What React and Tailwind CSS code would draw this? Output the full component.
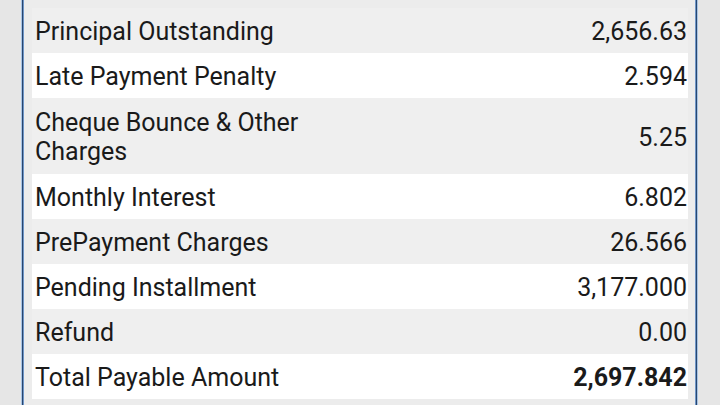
import React from "react";

const rows = [
  ["Principal Outstanding", "2,656.63"],
  ["Late Payment Penalty", "2.594"],
  ["Cheque Bounce & Other Charges", "5.25"],
  ["Monthly Interest", "6.802"],
  ["PrePayment Charges", "26.566"],
  ["Pending Installment", "3,177.000"],
  ["Refund", "0.00"],
  ["Total Payable Amount", "2,697.842", true],
];

export default function App() {
  return (
    <div
      className="w-[720px] h-[405px] overflow-hidden bg-[#e6e6e6] flex"
      style={{ fontFamily: "Roboto, 'Noto Sans', sans-serif" }}
    >
      <div className="ml-[21px] w-[677px] h-full flex border-x border-[#a9c4e4]">
        <div className="flex-1 flex border-x border-[#27466f]">
          <div className="flex-1 border-x border-[#6f95c6] bg-[#ececec] pt-[8px] pl-[8px] pr-[7px]">
            <div className="flex flex-col text-[25px] leading-[29px] text-[#1a1a1a]">
              {rows.map(([label, value, bold], i) => (
                <div
                  key={label}
                  className={`flex items-center ${i === 2 ? "pt-[10px] pb-[8px]" : "pt-[9px] pb-[7px]"} ${i % 2 === 0 ? "bg-[#efefef]" : "bg-white"}`}
                >
                  <div className="w-1/2 pl-[3px] pr-[20px]">{label}</div>
                  <div className={`w-1/2 text-right pr-[1px] ${bold ? "font-bold" : ""}`}>{value}</div>
                </div>
              ))}
            </div>
          </div>
        </div>
      </div>
    </div>
  );
}
